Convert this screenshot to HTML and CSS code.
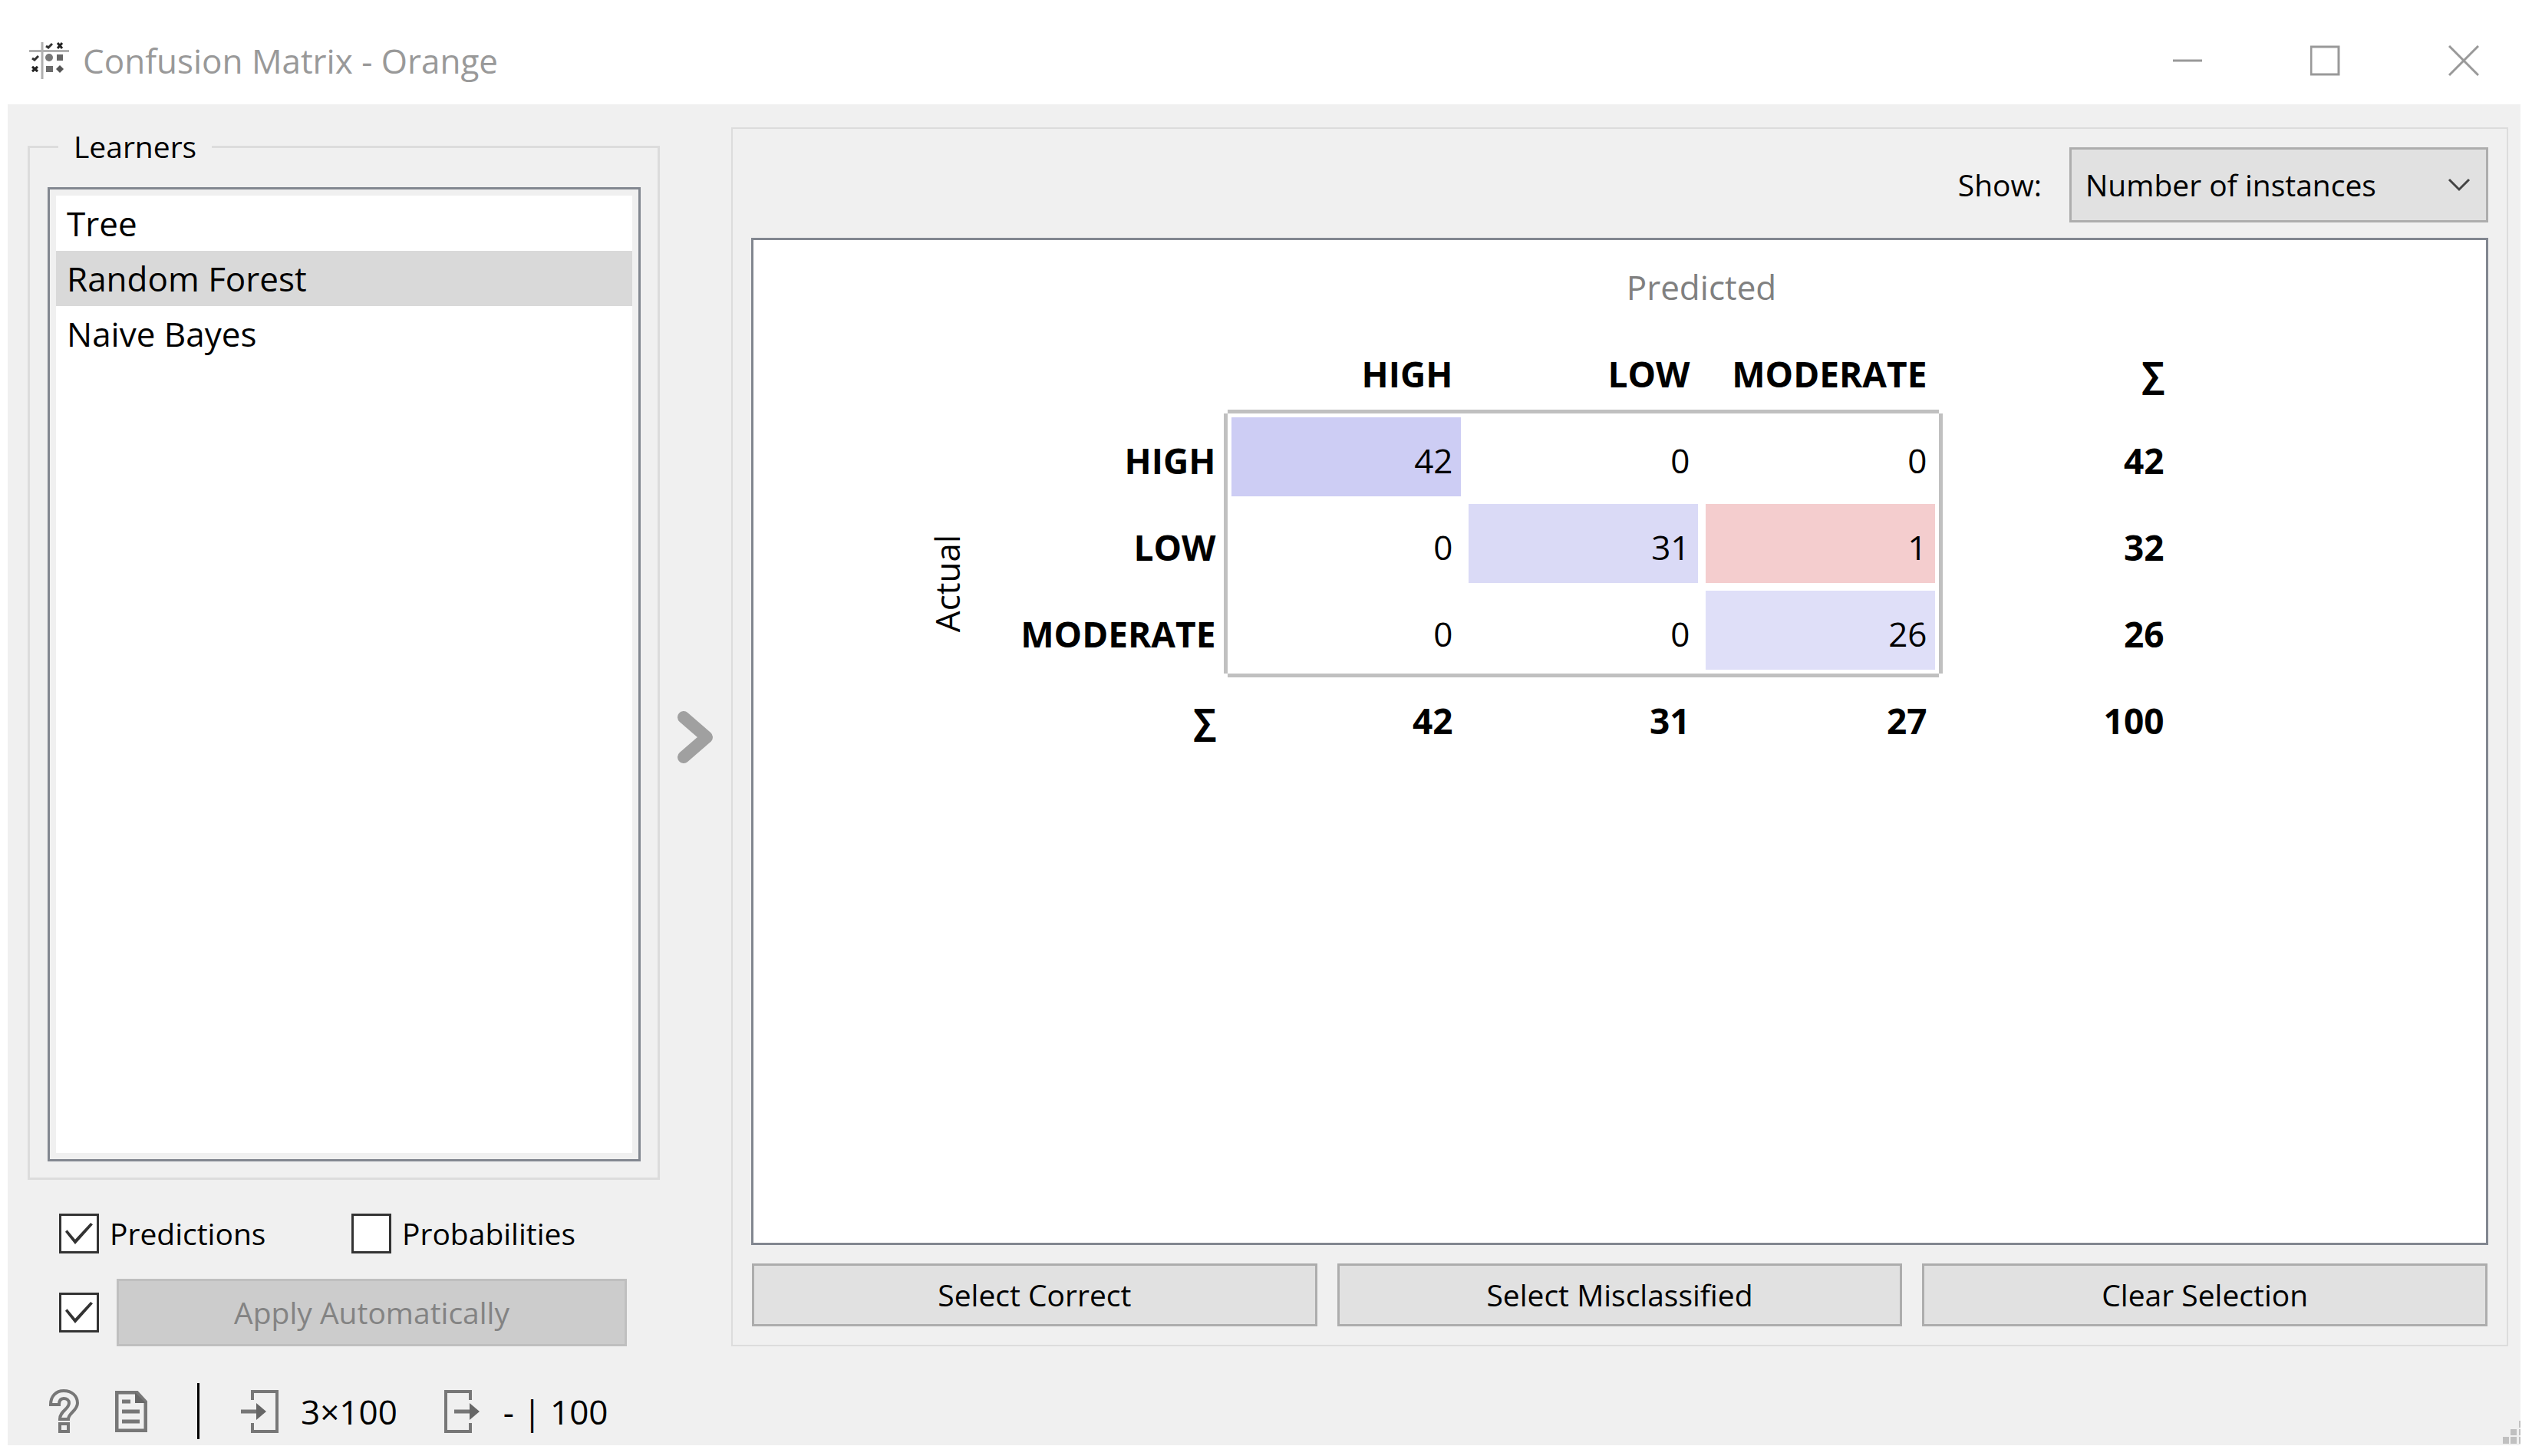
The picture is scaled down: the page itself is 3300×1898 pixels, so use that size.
FILE: index.html
```html
<!DOCTYPE html>
<html lang="en">
<head>
    <meta charset="UTF-8">
    <meta name="viewport" content="width=device-width, initial-scale=1.0">
    <title>Confusion Matrix - Orange</title>
    <link rel="stylesheet" href="styles.css">
</head>
<body>

    <header class="titlebar">
        <svg class="app-icon" viewBox="0 0 52 48" aria-hidden="true">
            <path d="M0 11.500H52M17 0V48" fill="none" stroke="#b0b0b0" stroke-width="3"/>
            <path d="M22 5l3 2 5-5M4 21l3 2 5-5" fill="none" stroke="#333" stroke-width="3"/>
            <path d="M37 1l6 7M43 1l-6 7M4 32l7 6M11 32l-7 6" fill="none" stroke="#222" stroke-width="3"/>
            <circle cx="26" cy="20" r="5" fill="#777"/>
            <rect x="36" y="16" width="8" height="8" fill="#666"/>
            <rect x="22" y="31" width="9" height="8" fill="#6c6c6c"/>
            <path d="M40 30l5 5-5 5-5-5z" fill="#555"/>
        </svg>
        <h1>Confusion Matrix - Orange</h1>
        <div class="window-buttons">
            <button aria-label="Minimize"><svg viewBox="0 0 40 40"><path d="M1 20H39"/></svg></button>
            <button aria-label="Maximize"><svg viewBox="0 0 40 40"><path d="M1 2H37V38H1z"/></svg></button>
            <button aria-label="Close"><svg viewBox="0 0 40 40"><path d="M1 1L39 39M39 1L1 39"/></svg></button>
        </div>
    </header>

    <div class="window">
        <main class="content">

            <section class="sidebar">
                <fieldset class="learners">
                    <legend>Learners</legend>
                    <ul class="list" role="listbox" aria-label="Learners">
                        <li role="option">Tree</li>
                        <li role="option" class="selected" aria-selected="true">Random Forest</li>
                        <li role="option">Naive Bayes</li>
                    </ul>
                </fieldset>

                <div class="outputs">
                    <label><input type="checkbox" checked>Predictions</label>
                    <label><input type="checkbox">Probabilities</label>
                </div>
                <div class="apply">
                    <input type="checkbox" checked aria-label="Apply Automatically">
                    <button disabled>Apply Automatically</button>
                </div>
            </section>

            <button class="splitter" aria-label="Hide controls">
                <svg viewBox="0 0 48 68"><path d="M8 8L38 34L8 60"/></svg>
            </button>

            <section class="panel">
                <div class="show">
                    <label for="quantity">Show:</label>
                    <div class="combo">
                        <select id="quantity">
                            <option>Number of instances</option>
                            <option>Proportion of predicted</option>
                            <option>Proportion of actual</option>
                        </select>
                        <svg viewBox="0 0 30 18" aria-hidden="true"><path d="M2 2L15 15L28 2"/></svg>
                    </div>
                </div>

                <div class="view">
                    <table class="matrix">
                        <colgroup>
                            <col class="side">
                            <col span="5">
                        </colgroup>
                        <tr>
                            <td></td>
                            <td></td>
                            <td class="predicted" colspan="4">Predicted</td>
                        </tr>
                        <tr>
                            <td></td>
                            <td></td>
                            <th class="line-bottom">HIGH</th>
                            <th class="line-bottom">LOW</th>
                            <th class="line-bottom">MODERATE</th>
                            <th>∑</th>
                        </tr>
                        <tr>
                            <td class="actual" rowspan="4"><span>Actual</span></td>
                            <th class="line-right">HIGH</th>
                            <td class="blue-3">42</td>
                            <td>0</td>
                            <td>0</td>
                            <th class="line-left">42</th>
                        </tr>
                        <tr>
                            <th class="line-right">LOW</th>
                            <td>0</td>
                            <td class="blue-2">31</td>
                            <td class="red">1</td>
                            <th class="line-left">32</th>
                        </tr>
                        <tr>
                            <th class="line-right">MODERATE</th>
                            <td>0</td>
                            <td>0</td>
                            <td class="blue-1">26</td>
                            <th class="line-left">26</th>
                        </tr>
                        <tr>
                            <th>∑</th>
                            <th class="line-top">42</th>
                            <th class="line-top">31</th>
                            <th class="line-top">27</th>
                            <th>100</th>
                        </tr>
                    </table>
                </div>

                <div class="actions">
                    <button>Select Correct</button>
                    <button>Select Misclassified</button>
                    <button>Clear Selection</button>
                </div>
            </section>
        </main>

        <footer class="statusbar">
            <button aria-label="Help">
                <svg width="40" height="58" viewBox="0 0 40 58">
                    <path d="M2 20C2 9 9 2 19 2C30 2 37 9 37 18C37 28 25 31 25 39H14C14 28 26 26 26 18C26 14 23 12 19 12C15 12 13 15 13 20Z"/>
                    <path d="M14 45H25V55H14z"/>
                </svg>
            </button>
            <button aria-label="Report">
                <svg width="42" height="54" viewBox="0 0 42 54">
                    <path class="thick" d="M2 2H28L40 15V52H2z"/>
                    <path class="solid" d="M26 2L40 16H26z"/>
                    <path class="thick" d="M9 14H20M9 27H32M9 40H32"/>
                </svg>
            </button>
            <span class="separator"></span>
            <span class="summary">
                <svg width="50" height="58" viewBox="0 0 50 58">
                    <path d="M15 14V3H47V55H15V44"/>
                    <path class="shaft" d="M0 29H22"/>
                    <path class="solid" d="M20 18L33 29L20 40z"/>
                </svg>
                3×100
            </span>
            <span class="summary">
                <svg width="50" height="58" viewBox="0 0 50 58">
                    <path d="M35 14V3H3V55H35V44"/>
                    <path class="shaft" d="M14 29H36"/>
                    <path class="solid" d="M34 18L47 29L34 40z"/>
                </svg>
                - | 100
            </span>
        </footer>

        <svg class="grip" viewBox="0 0 23 30" aria-hidden="true">
            <path d="M21 0h2v9h-2zM10 11h8v8h-8zM21 11h2v8h-2zM0 21h8v9h-8zM10 21h8v9h-8zM21 21h2v9h-2z"/>
        </svg>
    </div>

</body>
</html>
```
FILE: styles.css
```css
/* --- BASE --- */
* {
    box-sizing: border-box;
}

body {
    margin: 0;
    padding: 0 15px 14px 10px;
    min-height: 100vh;
    display: flex;
    flex-direction: column;
    background-color: #ffffff;
    color: #000000;
    font-family: 'Open Sans', 'Noto Sans', sans-serif;
    font-size: 39px;
    line-height: 50px;
}

button,
select {
    font: inherit;
    color: inherit;
    margin: 0;
    padding: 0;
    border: none;
    background: none;
}

svg {
    display: block;
    fill: none;
}

/* --- TITLE BAR --- */
.titlebar {
    display: flex;
    align-items: center;
    height: 136px;
    padding: 22px 54px 0 28px;
}

.app-icon {
    width: 52px;
    height: 48px;
    margin-right: 18px;
}

.titlebar h1 {
    margin: 0;
    font-size: 44px;
    font-weight: 400;
    color: #999999;
}

.window-buttons {
    display: flex;
    gap: 140px;
    margin-left: auto;
}

.window-buttons svg {
    width: 40px;
    height: 40px;
    stroke: #999999;
    stroke-width: 3;
}

/* --- WINDOW --- */
.window {
    position: relative;
    flex: 1;
    display: flex;
    flex-direction: column;
    background-color: #f0f0f0;
}

.content {
    flex: 1;
    display: grid;
    grid-template-columns: 824px 93px 1fr;
    padding: 30px 16px 0 26px;
}

/* --- LEFT SIDE --- */
.sidebar {
    display: flex;
    flex-direction: column;
}

.learners {
    flex: 1;
    display: flex;
    flex-direction: column;
    margin: 0;
    padding: 28px 22px 21px 23px;
    border: 3px solid #dcdcdc;
}

.learners legend {
    margin-left: 14px;
    padding: 0 20px;
}

.list {
    height: 100%;
    margin: 0;
    padding: 8px;
    list-style: none;
    font-size: 44px;
    border: 3px solid #828790;
    background-color: #ffffff;
    box-shadow: inset 0 0 0 8px #f0f0f0;
}

.list li {
    height: 72px;
    padding-left: 14px;
    line-height: 72px;
}

.list .selected {
    background-color: #d9d9d9;
}

input[type="checkbox"] {
    appearance: none;
    display: grid;
    place-items: center;
    width: 52px;
    height: 52px;
    margin: 0;
    border: 3px solid #333333;
    background-color: #ffffff;
}

input[type="checkbox"]:checked::before {
    content: '';
    width: 36px;
    height: 28px;
    background-color: #333333;
    clip-path: polygon(0 42%, 7% 33%, 36% 78%, 92% 0, 100% 8%, 36% 100%);
}

.outputs {
    display: grid;
    grid-template-columns: 381px 1fr;
    margin-top: 44px;
    padding-left: 41px;
}

.outputs label {
    display: flex;
    align-items: center;
    gap: 14px;
}

.apply {
    display: flex;
    align-items: center;
    gap: 23px;
    margin-top: 33px;
    padding: 0 43px 0 41px;
}

.apply button {
    flex: 1;
    height: 88px;
    border: 3px solid #bfbfbf;
    background-color: #cccccc;
    color: #838383;
}

/* --- SPLITTER ARROW --- */
.splitter {
    display: grid;
    place-items: center;
}

.splitter svg {
    width: 48px;
    height: 68px;
    stroke: #a0a0a0;
    stroke-width: 16;
    stroke-linecap: round;
    stroke-linejoin: round;
}

/* --- RIGHT SIDE --- */
.panel {
    display: flex;
    flex-direction: column;
    padding: 24px;
    border: 2px solid #dcdcdc;
}

.show {
    display: flex;
    justify-content: flex-end;
    align-items: center;
    gap: 36px;
    margin-bottom: 20px;
}

.combo {
    position: relative;
}

.combo select {
    appearance: none;
    display: block;
    width: 546px;
    height: 98px;
    padding: 0 18px;
    border: 3px solid #adadad;
    border-radius: 0;
    background-color: #e1e1e1;
}

.combo svg {
    position: absolute;
    top: 40px;
    right: 23px;
    width: 30px;
    height: 18px;
    stroke: #444444;
    stroke-width: 3;
    pointer-events: none;
}

.view {
    flex: 1;
    display: flex;
    justify-content: center;
    align-items: flex-start;
    padding-right: 210px;
    border: 3px solid #828790;
    background-color: #ffffff;
}

.actions {
    display: grid;
    grid-template-columns: repeat(3, 1fr);
    gap: 26px;
    margin-top: 24px;
    padding: 0 1px;
}

.actions button {
    height: 82px;
    border: 3px solid #adadad;
    background-color: #e1e1e1;
}

/* --- MATRIX --- */
.matrix {
    width: 1659px;
    table-layout: fixed;
    border-spacing: 0;
    font-size: 44px;
}

.matrix .side {
    width: 114px;
}

.matrix td,
.matrix th {
    height: 113px;
    padding: 8px 10px 0;
    border: 5px solid transparent;
    background-clip: padding-box;
    text-align: right;
}

.matrix th {
    font-size: 46px;
}

.matrix .predicted {
    text-align: center;
    color: #808080;
}

.matrix .actual {
    padding: 0;
    text-align: center;
}

.actual span {
    display: inline-block;
    writing-mode: vertical-rl;
    transform: rotate(180deg);
}

/* the frame is drawn by the header and total cells around it */
.matrix .line-top,
.matrix .line-bottom {
    padding-right: 15px;
    border-left-width: 0;
    border-right-width: 0;
}

.matrix .line-left,
.matrix .line-right {
    border-top-width: 0;
    border-bottom-width: 0;
}

.matrix .line-top {
    border-top-color: #c0c0c0;
}

.matrix .line-right {
    border-right-color: #c0c0c0;
}

.matrix .line-bottom {
    border-bottom-color: #c0c0c0;
}

.matrix .line-left {
    border-left-color: #c0c0c0;
}

.matrix .blue-3 {
    background-color: #cdcdf4;
}

.matrix .blue-2 {
    background-color: #dadaf6;
}

.matrix .blue-1 {
    background-color: #dfdff8;
}

.matrix .red {
    background-color: #f4cdce;
}

/* --- STATUS BAR --- */
.statusbar {
    display: flex;
    align-items: center;
    padding: 48px 54px 8px;
    font-size: 44px;
}

.statusbar svg {
    stroke: #777777;
    stroke-width: 4;
}

.statusbar .thick,
.statusbar .shaft {
    stroke-width: 5;
}

.statusbar .solid {
    fill: #666666;
    stroke: none;
}

.statusbar button + button {
    margin-left: 46px;
}

.separator {
    width: 3px;
    height: 73px;
    margin: 0 54px 0 65px;
    background-color: #000000;
}

.summary {
    display: flex;
    align-items: center;
    gap: 28px;
    margin-right: 60px;
}

/* --- RESIZE GRIP --- */
.grip {
    position: absolute;
    right: 0;
    bottom: 2px;
    width: 23px;
    height: 30px;
    fill: #c0c0c0;
}
```
